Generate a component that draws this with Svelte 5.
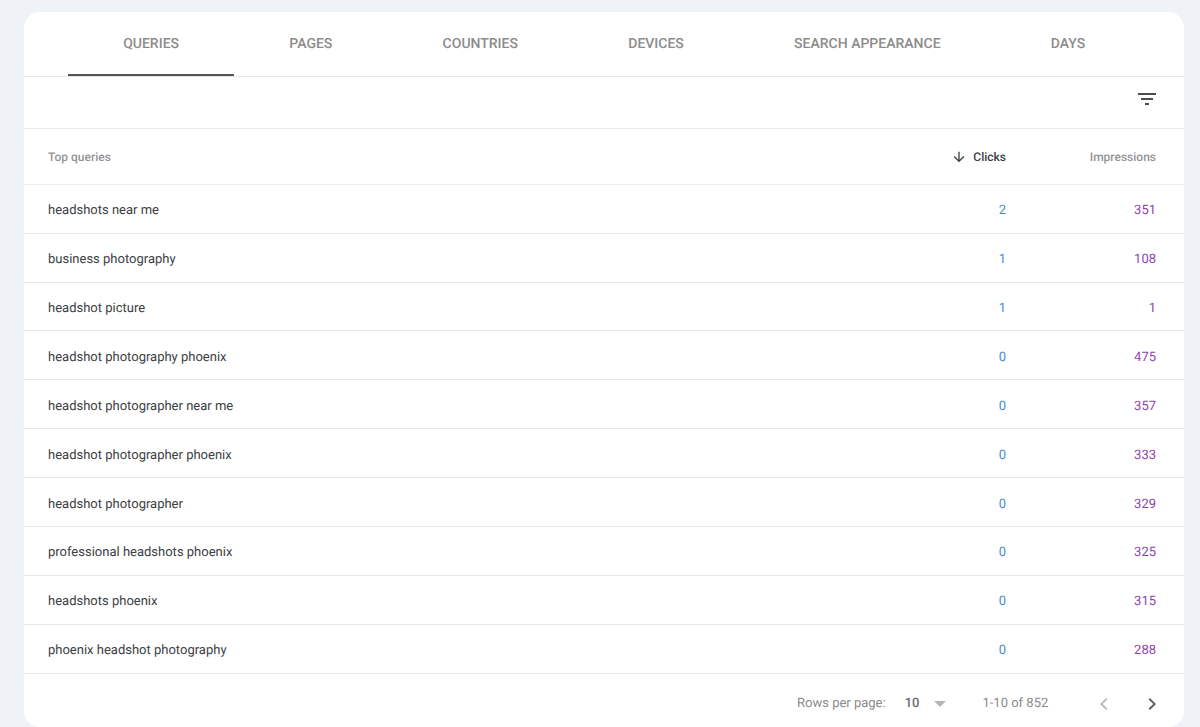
<script>
  const tabs = ['QUERIES', 'PAGES', 'COUNTRIES', 'DEVICES', 'SEARCH APPEARANCE', 'DAYS'];
  const rows = [
    ['headshots near me', 2, 351],
    ['business photography', 1, 108],
    ['headshot picture', 1, 1],
    ['headshot photography phoenix', 0, 475],
    ['headshot photographer near me', 0, 357],
    ['headshot photographer phoenix', 0, 333],
    ['headshot photographer', 0, 329],
    ['professional headshots phoenix', 0, 325],
    ['headshots phoenix', 0, 315],
    ['phoenix headshot photography', 0, 288]
  ];
</script>

<div class="page">
  <div class="card">
    <div class="tabs">
      {#each tabs as tab, i}
        <div class="tab" class:active={i === 0}>{tab}</div>
      {/each}
    </div>
    <div class="filter">
      <svg width="24" height="24" viewBox="0 0 24 24" fill="#4a4c4f"><path d="M3 6h18v2H3zM6 11h12v2H6zM10 16h4v2h-4z" /></svg>
    </div>
    <div class="row head">
      <div class="name">Top queries</div>
      <div class="clicks sorted">
        <svg width="16" height="16" viewBox="0 0 24 24" fill="#3c4043"><path d="M20 12l-1.41-1.41L13 16.17V4h-2v12.17l-5.58-5.59L4 12l8 8 8-8z" /></svg>
        Clicks
      </div>
      <div class="imps">Impressions</div>
    </div>
    {#each rows as r}
      <div class="row item">
        <div class="name">{r[0]}</div>
        <div class="clicks">{r[1]}</div>
        <div class="imps">{r[2]}</div>
      </div>
    {/each}
    <div class="footer">
      <span class="rpp">Rows per page:</span>
      <span class="size">10</span>
      <span class="caret"></span>
      <span class="range">1-10 of 852</span>
      <svg class="prev" width="24" height="24" viewBox="0 0 24 24" fill="#bdbdbd"><path d="M15.41 7.41L14 6l-6 6 6 6 1.41-1.41L10.83 12z" /></svg>
      <svg class="next" width="24" height="24" viewBox="0 0 24 24" fill="#5f6368"><path d="M10 6L8.59 7.41 13.17 12l-4.58 4.59L10 18l6-6z" /></svg>
    </div>
  </div>
</div>

<style>
  :global(body) {
    margin: 0;
    background: #eff3f8;
    font-family: Roboto, "Liberation Sans", sans-serif;
    text-rendering: geometricPrecision;
  }
  .page {
    height: 727px;
    box-sizing: border-box;
    padding: 12px 16px 0 24px;
    overflow: hidden;
  }
  .card {
    background: #fff;
    border-radius: 16px;
    height: 715px;
  }
  .tabs {
    display: flex;
    height: 64px;
    padding-left: 44px;
    border-bottom: 1px solid #e5e7e9;
  }
  .tab {
    position: relative;
    padding: 0 55.15px;
    height: 64px;
    line-height: 64px;
    font-size: 14px;
    font-weight: 500;
    color: #8c8c8c;
    white-space: nowrap;
  }
  .tab.active::after {
    content: '';
    position: absolute;
    left: 0;
    right: 0;
    bottom: 0;
    height: 2.5px;
    background: #555;
  }
  .filter {
    display: flex;
    justify-content: flex-end;
    align-items: center;
    height: 44px;
    padding: 0 25px 7px 0;
    border-bottom: 1px solid #e8eaec;
  }
  .row {
    display: flex;
    align-items: center;
    padding: 0 28px 0 24px;
    font-size: 13px;
    border-bottom: 1px solid #e6e8ea;
  }
  .head {
    height: 53.82px;
    padding-top: 1px;
    font-size: 12px;
    font-weight: 500;
    color: #939496;
    border-bottom-width: 1.5px;
    border-bottom-color: #eceef0;
  }
  .item {
    height: 43.89px;
    padding-top: 4px;
    color: #3c4043;
  }
  .name {
    flex: 1;
  }
  .clicks {
    width: 100px;
    text-align: right;
    color: #4a8ad0;
  }
  .imps {
    width: 150px;
    text-align: right;
    color: #8e44ad;
  }
  .head .clicks, .head .imps {
    color: #939496;
  }
  .head .clicks.sorted {
    color: #3c4043;
    display: flex;
    justify-content: flex-end;
    align-items: center;
    gap: 6px;
  }
  .footer {
    display: flex;
    align-items: center;
    height: 52px;
    padding-top: 4px;
    font-size: 13px;
    color: #8a8b8d;
    padding-left: 773px;
  }
  .size {
    margin-left: 19px;
    color: #6a6d70;
    font-weight: 500;
  }
  .caret {
    width: 0;
    height: 0;
    margin-left: 15px;
    border-left: 6px solid transparent;
    border-right: 6px solid transparent;
    border-top: 6px solid #b4b5b7;
  }
  .range {
    margin-left: 36px;
  }
  .prev {
    margin-left: 44px;
  }
  .next {
    margin-left: 24px;
  }
</style>
